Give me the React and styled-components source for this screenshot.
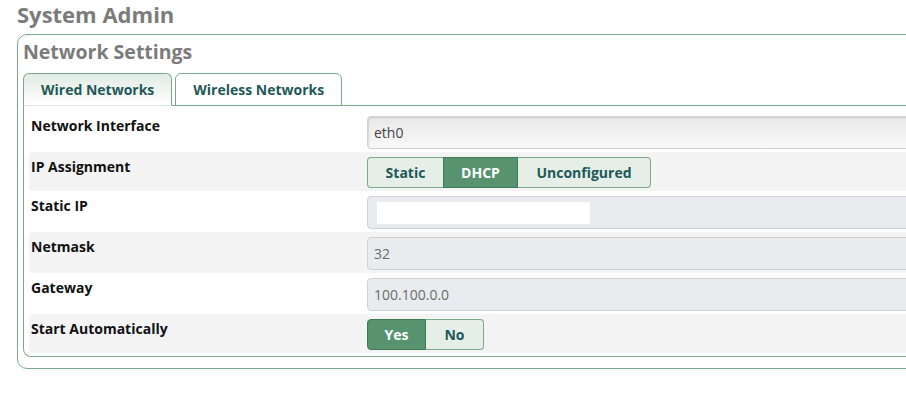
import React, { useState } from 'react'
import styled, { createGlobalStyle } from 'styled-components'

const GlobalStyle = createGlobalStyle`
  html, body {
    margin: 0;
    padding: 0;
    overflow: hidden;
    background: #fff;
  }
  body {
    font-family: "Open Sans", "Liberation Sans", sans-serif;
    font-size: 14px;
    color: #111;
  }
`

const Page = styled.div`
  width: 1100px;
  padding: 0 0 0 17px;
`

const Title = styled.h1`
  margin: 0;
  height: 34px;
  font-size: 22px;
  line-height: 26px;
  font-weight: 700;
  color: #7b7b7b;
  padding-top: 1px;
  box-sizing: border-box;
`

const Box = styled.section`
  width: 1000px;
  border: 1px solid #7ba88b;
  border-radius: 10px;
  padding: 0 0 11px 5px;
`

const BoxTitle = styled.h2`
  margin: 0;
  height: 38px;
  font-size: 19.5px;
  line-height: 26px;
  font-weight: 700;
  color: #7b7b7b;
  padding-top: 4px;
  box-sizing: border-box;
`

const Tabs = styled.div`
  display: flex;
  gap: 3px;
  position: relative;
  z-index: 1;
  margin-bottom: -1px;
`

const Tab = styled.button`
  height: 33px;
  padding: 0 17px;
  border: 1px solid #7ba88b;
  border-bottom-color: ${p => (p.$active ? '#dbe8df' : '#7ba88b')};
  border-radius: 6px 6px 0 0;
  background: ${p => (p.$active ? 'linear-gradient(#e1ebe4, #ffffff)' : '#fff')};
  font-family: inherit;
  font-size: 14px;
  font-weight: 700;
  color: #1e5858;
  cursor: pointer;
`

const Panel = styled.div`
  border: 1px solid #7ba88b;
  border-right: none;
  border-radius: 0 0 0 8px;
  padding: 5px 0 3px 5px;
`

const Row = styled.div`
  display: grid;
  grid-template-columns: 338px 1fr;
  padding: 5px 0 3px;
  border-radius: 4px 0 0 4px;
  background: ${p => (p.$alt ? '#f4f4f4' : 'transparent')};
`

const Label = styled.div`
  font-weight: 700;
  font-size: 14px;
  line-height: 20px;
  padding-left: 2px;
  color: #111;
`

const Field = styled.div`
  height: 33px;
  box-sizing: border-box;
  border: 1px solid #cfd1d4;
  border-radius: 4px 0 0 4px;
  padding: 0 6px;
  display: flex;
  align-items: center;
  font-size: 14px;
  color: ${p => (p.$disabled ? '#6b6b6b' : '#444')};
  background: ${p => (p.$select
    ? 'linear-gradient(#e8e8e8, #f9f9f9)'
    : p.$disabled ? '#e9ecef' : '#fff')};
  box-shadow: ${p => (p.$select ? 'inset 1px 1px 2px rgba(0,0,0,0.12)' : 'none')};
`

const BlankInput = styled.div`
  width: 213px;
  height: 22px;
  background: #fff;
  margin-left: 3px;
`

const Group = styled.div`
  display: flex;
  height: 31px;
`

const Seg = styled.button`
  height: 31px;
  box-sizing: border-box;
  width: ${p => p.$w}px;
  padding: 0;
  font-family: inherit;
  font-size: 14px;
  font-weight: 700;
  cursor: pointer;
  border: 1px solid ${p => (p.$active ? '#3f7a57' : '#7ba88b')};
  border-left-width: ${p => (p.$first || p.$active ? '1px' : '0')};
  border-right-width: ${p => (p.$last || p.$active ? '1px' : '0')};
  background: ${p => (p.$active ? '#57936f' : '#e5efe8')};
  color: ${p => (p.$active ? '#fff' : '#1e5858')};
  border-radius: ${p => (p.$first ? '4px 0 0 4px' : p.$last ? '0 4px 4px 0' : '0')};
`

function Segmented({ options, value, onChange }) {
  return (
    <Group>
      {options.map((o, i) => (
        <Seg
          key={o.label}
          $w={o.w}
          $first={i === 0}
          $last={i === options.length - 1}
          $active={value === o.label}
          onClick={() => onChange(o.label)}
        >
          {o.label}
        </Seg>
      ))}
    </Group>
  )
}

export default function App() {
  const [tab, setTab] = useState('wired')
  const [mode, setMode] = useState('DHCP')
  const [auto, setAuto] = useState('Yes')

  return (
    <Page>
      <GlobalStyle />
      <Title>System Admin</Title>
      <Box>
        <BoxTitle>Network Settings</BoxTitle>
        <Tabs>
          <Tab $active={tab === 'wired'} onClick={() => setTab('wired')}>Wired Networks</Tab>
          <Tab $active={tab === 'wireless'} onClick={() => setTab('wireless')}>Wireless Networks</Tab>
        </Tabs>
        <Panel>
          <Row>
            <Label>Network Interface</Label>
            <Field $select>eth0</Field>
          </Row>
          <Row $alt>
            <Label>IP Assignment</Label>
            <Segmented
              value={mode}
              onChange={setMode}
              options={[{ label: 'Static', w: 76 }, { label: 'DHCP', w: 75 }, { label: 'Unconfigured', w: 133 }]}
            />
          </Row>
          <Row>
            <Label>Static IP</Label>
            <Field $disabled><BlankInput /></Field>
          </Row>
          <Row $alt>
            <Label>Netmask</Label>
            <Field $disabled>32</Field>
          </Row>
          <Row>
            <Label>Gateway</Label>
            <Field $disabled>100.100.0.0</Field>
          </Row>
          <Row $alt>
            <Label>Start Automatically</Label>
            <Segmented
              value={auto}
              onChange={setAuto}
              options={[{ label: 'Yes', w: 59 }, { label: 'No', w: 58 }]}
            />
          </Row>
        </Panel>
      </Box>
    </Page>
  )
}
